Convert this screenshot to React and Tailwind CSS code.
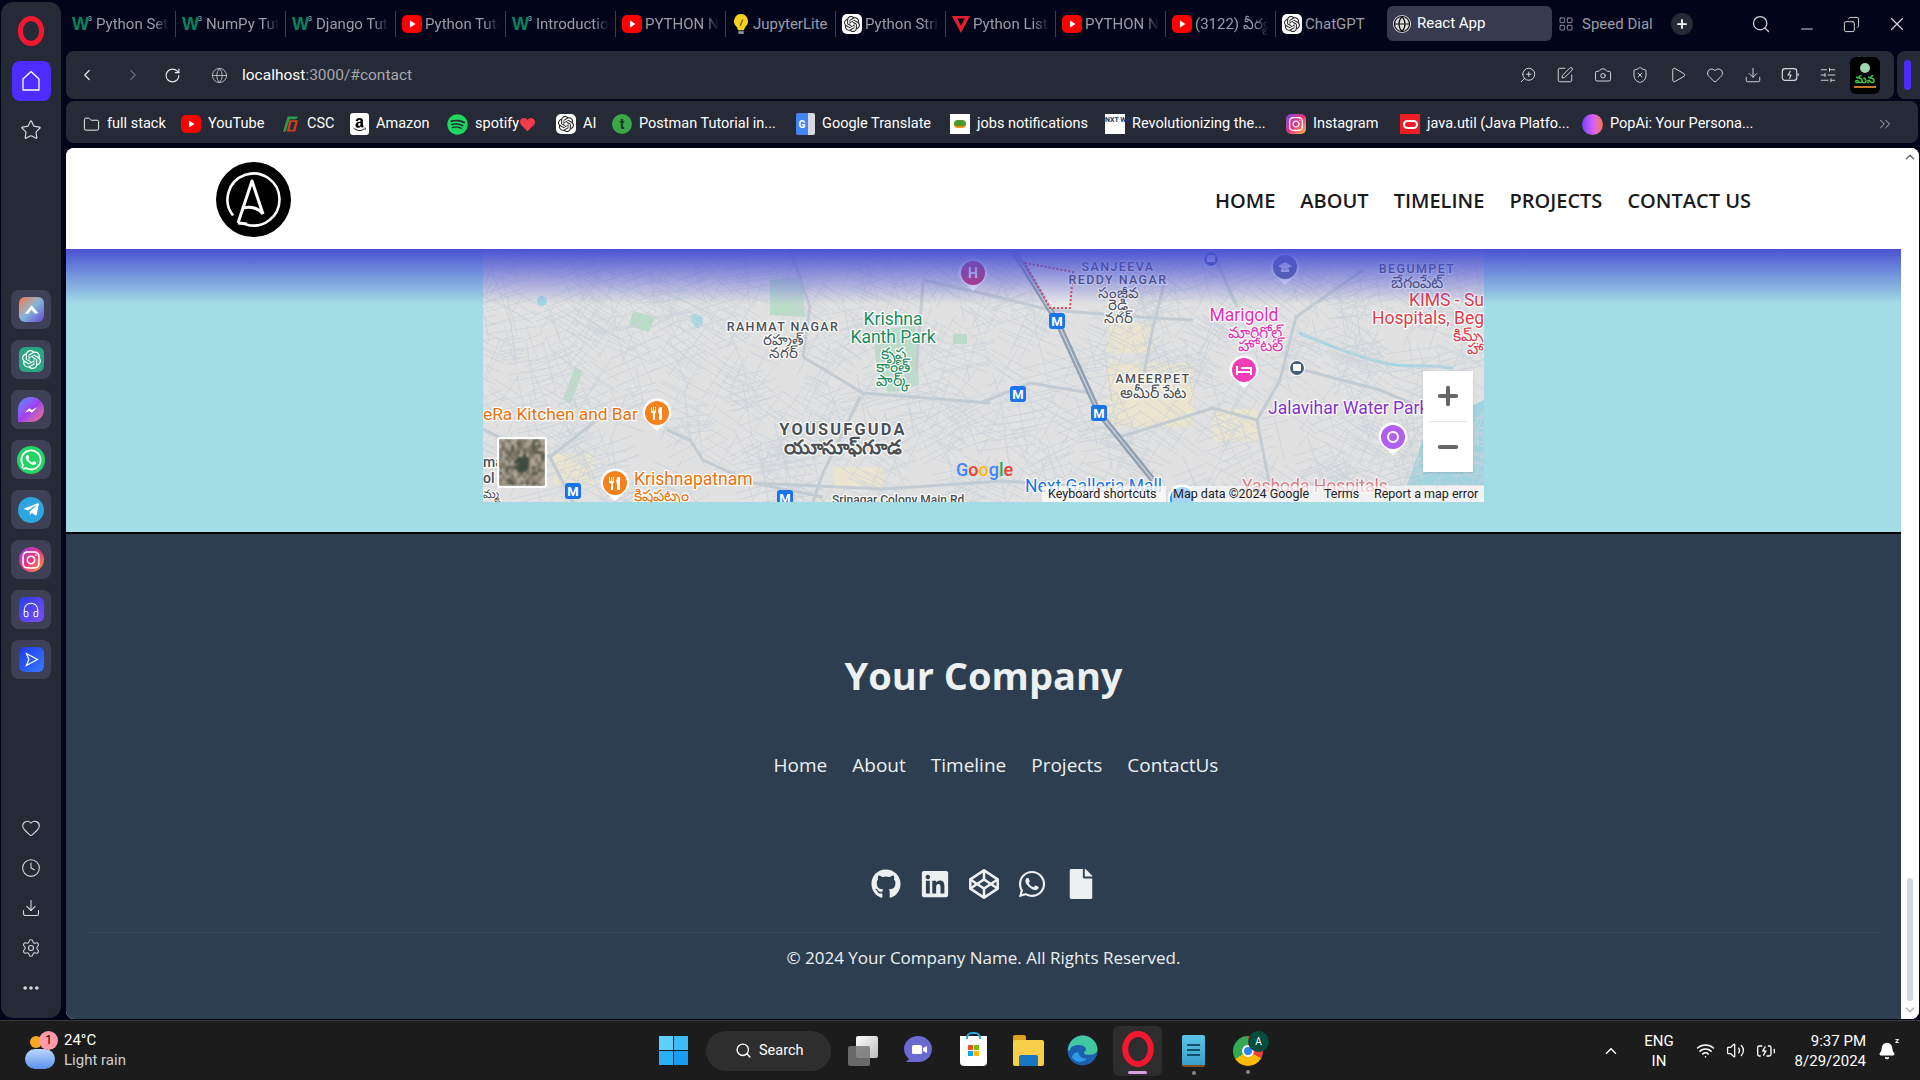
import React from 'react'
import { ChevronLeft, ChevronRight, RotateCw, Globe, Search, Minus, Copy, X, Plus, LayoutGrid, Star, Heart, Clock, Download, Settings, MoreHorizontal, ZoomIn, SquarePen, Camera, ShieldX, Play, SlidersHorizontal, Folder, ChevronsRight, ChevronUp, ChevronDown, Wifi, Volume2, BatteryCharging, Bell, Headphones } from 'lucide-react'
import { FaGithub, FaLinkedin, FaCodepen, FaWhatsapp, FaFile, FaTelegramPlane, FaInstagram, FaSpotify, FaAmazon, FaHeart } from 'react-icons/fa'
import { SiOpenai } from 'react-icons/si'

const YT = () => (
  <svg viewBox="0 0 20 20" className="w-[20px] h-[20px] shrink-0">
    <rect x="0" y="1" width="20" height="18" rx="5" fill="#f00" />
    <path d="M8 6.5 13.5 10 8 13.5z" fill="#fff" />
  </svg>
)
const W3 = () => (
  <span className="w-[21px] shrink-0 flex items-start text-[#04845c] font-bold text-[18px] leading-none font-['Liberation_Sans'] tracking-[-1px]">W<span className="text-[7px] text-[#bbb] font-normal tracking-normal">3</span></span>
)
const Gpt = () => (
  <span className="w-[20px] h-[20px] shrink-0 rounded-[5px] bg-white flex items-center justify-center"><SiOpenai className="w-[16px] h-[16px] text-[#222]" /></span>
)
const Bulb = () => (
  <svg viewBox="0 0 20 24" className="w-[18px] h-[22px] shrink-0">
    <path d="M10 1a8 8 0 0 0-5 14c1 1 1 3 2 4h6c1-1 1-3 2-4a8 8 0 0 0-5-14z" fill="#f5d21f" />
    <path d="M7 20h6v3H7z" fill="#999" />
    <path d="M9 14l3-7" stroke="#7a5b00" strokeWidth="1.4" />
  </svg>
)
const RedV = () => (
  <svg viewBox="0 0 20 20" className="w-[18px] h-[20px] shrink-0">
    <path d="M0 1h20L10 20z" fill="#e5202e" />
    <path d="M6 4h8l-4 8z" fill="#02051a" />
  </svg>
)

const tabs = [
  { icon: W3, label: 'Python Sets', fade: true },
  { icon: W3, label: 'NumPy Tutorial', fade: true },
  { icon: W3, label: 'Django Tutorial', fade: true },
  { icon: YT, label: 'Python Tutorial', fade: true },
  { icon: W3, label: 'Introduction', fade: true },
  { icon: YT, label: 'PYTHON Notes', fade: true },
  { icon: Bulb, label: 'JupyterLite' },
  { icon: Gpt, label: 'Python Strings', fade: true },
  { icon: RedV, label: 'Python Lists', fade: true },
  { icon: YT, label: 'PYTHON Notes', fade: true },
  { icon: YT, label: '(3122) వీర్య', fade: true },
  { icon: Gpt, label: 'ChatGPT' },
]

const Opera = ({ className }) => (
  <svg viewBox="0 0 24 24" className={className}>
    <ellipse cx="12" cy="12" rx="8.5" ry="10" fill="none" stroke="#f5172f" strokeWidth="4" />
  </svg>
)

const BatterySaver = ({ className }) => (
  <svg viewBox="0 0 20 20" className={className}>
    <rect x="1.5" y="3" width="16" height="13" rx="3" fill="none" stroke="currentColor" strokeWidth="1.3" />
    <path d="M19 8v3" stroke="currentColor" strokeWidth="1.3" />
    <path d="M10.5 5.5 8 10h3l-1.5 4" fill="none" stroke="currentColor" strokeWidth="1.3" />
  </svg>
)

const bookmarkIcons = {
  csc: (
    <svg viewBox="0 0 20 20" className="w-[19px] h-[20px] shrink-0">
      <path d="M7 2h11l-2 3H9L5 18H2z" fill="#2a9d4a" />
      <path d="M9 6h9l-3 12H6zM11 8l-2 8h4l2-8z" fill="#d8391f" fillRule="evenodd" />
    </svg>
  ),
  amazon: <span className="w-[19px] h-[22px] shrink-0 bg-white rounded-[3px] flex items-center justify-center"><FaAmazon className="w-[15px] h-[15px] text-black" /></span>,
  spotify: <FaSpotify className="w-[21px] h-[21px] shrink-0 text-[#1ed760]" />,
  postman: <span className="w-[20px] h-[20px] shrink-0 rounded-full bg-[#3aa648] flex items-center justify-center text-[#12361a] font-bold text-[14px] leading-none">t</span>,
  translate: <span className="w-[19px] h-[22px] shrink-0 rounded-[2px] bg-[#4285f4] flex items-center justify-center text-white text-[10px] font-bold border-r-[7px] border-[#d7dadf]">G</span>,
  jobs: <span className="w-[20px] h-[20px] shrink-0 bg-white flex items-center justify-center"><span className="w-[12px] h-[8px] rounded-full bg-[#4c9a2a] border-b-2 border-[#f08a1d]" /></span>,
  nxt: <span className="w-[20px] h-[20px] shrink-0 bg-white text-[#183b73] text-[7px] font-bold leading-[8px] text-center pt-[2px]">NXT WAVE</span>,
  insta: <span className="w-[20px] h-[20px] shrink-0 rounded-[5px] bg-linear-to-br from-[#7b36e0] via-[#ea2a80] to-[#fdb02c] flex items-center justify-center"><FaInstagram className="w-[16px] h-[16px] text-white" /></span>,
  java: <span className="w-[20px] h-[20px] shrink-0 bg-[#ef1c25] flex items-center justify-center"><span className="w-[15px] h-[9px] rounded-[5px] border-2 border-white" /></span>,
  popai: <span className="w-[21px] h-[21px] shrink-0 rounded-full bg-linear-to-r from-[#7a3cff] via-[#d05cff] to-[#ff6a3c]" />,
}

const bookmarks = [
  { name: 'full stack', icon: <Folder className="w-[17px] h-[17px] shrink-0 text-[#eee]" strokeWidth={1.4} />, w: 'w-[98px]' },
  { name: 'YouTube', icon: <YT />, w: 'w-[100px]' },
  { name: 'CSC', icon: bookmarkIcons.csc, w: 'w-[69px]' },
  { name: 'Amazon', icon: bookmarkIcons.amazon, w: 'w-[97px]' },
  { name: 'spotify', icon: bookmarkIcons.spotify, extra: <FaHeart className="w-[15px] h-[15px] text-[#f13a4a] ml-[1px]" />, w: 'w-[109px]' },
  { name: 'AI', icon: <Gpt />, w: 'w-[56px]' },
  { name: 'Postman Tutorial in...', icon: bookmarkIcons.postman, w: 'w-[184px]' },
  { name: 'Google Translate', icon: bookmarkIcons.translate, w: 'w-[154px]' },
  { name: 'jobs notifications', icon: bookmarkIcons.jobs, w: 'w-[155px]' },
  { name: 'Revolutionizing the...', icon: bookmarkIcons.nxt, w: 'w-[181px]' },
  { name: 'Instagram', icon: bookmarkIcons.insta, w: 'w-[114px]' },
  { name: 'java.util (Java Platfo...', icon: bookmarkIcons.java, w: 'w-[182px]' },
  { name: 'PopAi: Your Persona...', icon: bookmarkIcons.popai, w: 'w-[190px]' },
]

const Sidebar = () => {
  const apps = [
    <span key="a" className="w-[25px] h-[25px] rounded-md bg-linear-to-br from-[#f0703c] via-[#7fb5d8] to-[#6a3fd0] flex items-center justify-center"><svg viewBox="0 0 20 20" className="w-[17px] h-[17px]"><path d="M2 15 10 5l8 9-4 1-4-5-4 5z" fill="#fff" /></svg></span>,
    <span key="b" className="w-[25px] h-[25px] rounded-md bg-[#2aa583] flex items-center justify-center"><SiOpenai className="w-[19px] h-[19px] text-white" /></span>,
    <span key="c" className="w-[26px] h-[25px] rounded-full rounded-bl-[4px] bg-linear-to-br from-[#2f8bff] via-[#a03df0] to-[#ff6a6a] flex items-center justify-center"><svg viewBox="0 0 20 20" className="w-[18px] h-[18px]"><path d="M3 13l5-5 3 2 6-3-6 6-3-2z" fill="#fff" /></svg></span>,
    <FaWhatsapp key="d" className="w-[28px] h-[28px] text-white bg-[#25d366] rounded-full p-[2px]" />,
    <span key="e" className="w-[26px] h-[26px] rounded-full bg-[#2ca5e0] flex items-center justify-center"><FaTelegramPlane className="w-[17px] h-[17px] text-white" /></span>,
    <span key="f" className="w-[25px] h-[25px] rounded-full bg-linear-to-br from-[#8a2be2] via-[#ee2a7b] to-[#ff9a1f] flex items-center justify-center"><FaInstagram className="w-[20px] h-[20px] text-white" /></span>,
    <span key="g" className="w-[25px] h-[25px] rounded-md bg-linear-to-br from-[#1f3bf0] to-[#7a4bf5] flex items-center justify-center"><Headphones className="w-[18px] h-[18px] text-white" strokeWidth={1.4} /></span>,
    <span key="h" className="w-[25px] h-[25px] rounded-md bg-linear-to-br from-[#2430f0] to-[#3a7af5] flex items-center justify-center"><svg viewBox="0 0 20 20" className="w-[17px] h-[17px]"><path d="M4 3l13 7-13 7 3-7z" fill="none" stroke="#fff" strokeWidth="1.4" /></svg></span>,
  ]
  return (
    <aside className="w-[60px] ml-px mr-[5px] my-[2px] shrink-0 rounded-xl bg-[#262936] flex flex-col items-center">
      <Opera className="w-[30px] h-[30px] mt-[14px]" />
      <div className="w-[39px] h-[40px] mt-[15px] rounded-lg bg-[#4e2bff] flex items-center justify-center">
        <svg viewBox="0 0 20 22" className="w-[20px] h-[22px]"><path d="M2 9 10 1.5 18 9v11H2z" fill="none" stroke="#fff" strokeWidth="1.3" strokeLinejoin="round" /></svg>
      </div>
      <Star className="w-[22px] h-[22px] mt-[18px] text-[#d8d8dc]" strokeWidth={1.3} />
      <div className="mt-[149px] flex flex-col gap-[11px]">
        {apps.map((a, i) => (
          <div key={i} className="w-[40px] h-[39px] rounded-lg bg-[#3e4155] flex items-center justify-center">{a}</div>
        ))}
      </div>
      <div className="mt-auto mb-[20px] flex flex-col items-center gap-[20px] text-[#d8d8dc]">
        <Heart className="w-[20px] h-[20px]" strokeWidth={1.3} />
        <Clock className="w-[20px] h-[20px]" strokeWidth={1.3} />
        <Download className="w-[20px] h-[20px]" strokeWidth={1.3} />
        <Settings className="w-[20px] h-[20px]" strokeWidth={1.3} />
        <MoreHorizontal className="w-[20px] h-[20px]" strokeWidth={2.4} />
      </div>
    </aside>
  )
}

const TabRow = () => (
  <div className="h-[51px] shrink-0 flex items-start font-['Roboto'] text-[15px]">
    <div className="flex mt-[11px]">
      {tabs.map((t, i) => {
        const Icon = t.icon
        return (
          <div key={i} className={`w-[110px] h-[26px] pl-[6px] pr-[6px] flex items-center gap-[3px] overflow-hidden ${i < 11 ? 'border-r border-[#3a3d4c]' : ''}`}>
            <Icon />
            <span className={`whitespace-nowrap overflow-hidden text-[#9b9da6] ${t.fade ? '[mask-image:linear-gradient(to_right,black_80%,transparent)]' : ''}`}>{t.label}</span>
          </div>
        )
      })}
    </div>
    <div className="w-[165px] h-[35px] mt-[6px] ml-px rounded-md bg-[#383b50] flex items-center pl-[6px] gap-[6px] text-white">
      <Globe className="w-[18px] h-[18px] text-[#111] bg-[#ddd] rounded-full" strokeWidth={1.6} />
      <span>React App</span>
    </div>
    <div className="flex items-center h-[26px] mt-[11px] ml-[6px] gap-[8px] text-[#9b9da6]">
      <LayoutGrid className="w-[16px] h-[16px]" strokeWidth={1.3} />
      <span>Speed Dial</span>
    </div>
    <span className="w-[22px] h-[22px] mt-[13px] ml-[18px] rounded-full bg-[#262936] flex items-center justify-center"><Plus className="w-[14px] h-[14px] text-white" strokeWidth={3} /></span>
    <Search className="w-[20px] h-[20px] mt-[14px] ml-[58px] text-[#d4d4d8]" strokeWidth={1.5} />
    <Minus className="w-[18px] h-[18px] mt-[20px] ml-[27px] text-[#d4d4d8]" strokeWidth={1.4} />
    <Copy className="w-[17px] h-[17px] mt-[16px] ml-[27px] text-[#d4d4d8] -scale-x-100" strokeWidth={1.4} />
    <X className="w-[22px] h-[22px] mt-[13px] ml-[26px] text-[#d4d4d8]" strokeWidth={1.3} />
  </div>
)

const AddressRow = () => {
  const tools = [SquarePen, Camera, ShieldX, Play, Heart, Download]
  return (
    <div className="h-[48px] shrink-0 flex font-['Roboto']">
      <div className="w-[1828px] rounded-lg bg-[#262936] flex items-center pl-[12px] pr-[14px]">
        <ChevronLeft className="w-[18px] h-[18px] text-[#e8e8ea]" strokeWidth={1.6} />
        <ChevronRight className="w-[18px] h-[18px] ml-[28px] text-[#676a75]" strokeWidth={1.6} />
        <RotateCw className="w-[17px] h-[17px] ml-[22px] text-[#e8e8ea]" strokeWidth={1.6} />
        <Globe className="w-[17px] h-[17px] ml-[30px] text-[#c8c8cc]" strokeWidth={1.2} />
        <span className="ml-[14px] mt-[2px] text-[15.5px] text-white">localhost<span className="text-[#a6a8b0]">:3000/#contact</span></span>
        <div className="ml-auto flex items-center gap-[19.5px] text-[#d6d6da]">
          <ZoomIn className="w-[18px] h-[18px] -scale-x-100" strokeWidth={1.3} />
          {tools.map((Tool, i) => <Tool key={i} className="w-[18px] h-[18px]" strokeWidth={1.3} />)}
          <BatterySaver className="w-[18px] h-[18px]" />
          <SlidersHorizontal className="w-[18px] h-[18px]" strokeWidth={1.3} />
          <span className="w-[30px] h-[37px] -ml-[6px] rounded-md bg-black flex flex-col items-center justify-center overflow-hidden">
            <span className="w-[10px] h-[10px] rounded-full bg-[#9fd8b0]" />
            <span className="text-[#3fd04a] text-[11px] font-bold leading-[13px]">మన</span>
            <span className="w-[22px] h-[2px] bg-[#c77a2a]" />
          </span>
        </div>
      </div>
      <div className="ml-[3px] flex-1 rounded-l-lg bg-[#262936] flex items-center pl-[7px]">
        <span className="w-[7px] h-[30px] rounded-full bg-[#4e2bff]" />
      </div>
    </div>
  )
}

const BookmarkRow = () => (
  <div className="h-[42px] mt-[2px] mr-[2px] pt-[4px] shrink-0 rounded-lg bg-[#262936] flex items-center pl-[17px] font-['Roboto'] text-[14.5px] text-white">
    {bookmarks.map((b, i) => (
      <div key={i} className={`${b.w} shrink-0 flex items-center gap-[7px] whitespace-nowrap`}>
        {b.icon}
        <span className="flex items-center">{b.name}{b.extra}</span>
      </div>
    ))}
    <ChevronsRight className="w-[18px] h-[18px] ml-auto mr-[24px] text-[#c8c8cc]" strokeWidth={1.2} />
  </div>
)

const Logo = () => (
  <svg viewBox="0 0 75 75" className="w-[75px] h-[75px]">
    <circle cx="37.5" cy="37.5" r="37.5" fill="#000" />
    <path d="M17 53.5A26 26 0 1 1 30 62.4" fill="none" stroke="#fff" strokeWidth="2.6" />
    <path d="M22 61 36 19 47 52M27 46c8-2 15 0 20 6M22 61l9 1" fill="none" stroke="#fff" strokeWidth="3" strokeLinejoin="round" />
  </svg>
)

// seeded so the street pattern stays the same on each load
const seeded = start => {
  let s = start
  return () => {
    s = (s * 16807) % 2147483647
    return s / 2147483647
  }
}

const buildStreets = () => {
  const rnd = seeded(17)
  let d = ''
  for (let i = 0; i < 520; i++) {
    const cx = rnd() * 1001
    const cy = rnd() * 253
    const a = (rnd() < 0.6 ? 0.3 : -0.5) + rnd() * 0.4
    const ux = Math.cos(a)
    const uy = Math.sin(a)
    const len = 10 + rnd() * 20
    const n = 2 + Math.floor(rnd() * 3)
    for (let j = 0; j < n; j++) {
      const o = j * (6 + rnd() * 5)
      const x = cx - uy * o
      const y = cy + ux * o
      d += `M${(x - ux * len).toFixed(1)} ${(y - uy * len).toFixed(1)}L${(x + ux * len).toFixed(1)} ${(y + uy * len).toFixed(1)}`
    }
    const cl = 10 + rnd() * 12
    d += `M${(cx + uy * cl).toFixed(1)} ${(cy - ux * cl).toFixed(1)}L${(cx - uy * cl * 2).toFixed(1)} ${(cy + ux * cl * 2).toFixed(1)}`
  }
  return d
}
const streets = buildStreets()

const buildThumb = () => {
  const rnd = seeded(91)
  const tones = ['#8f8572', '#6f6c5c', '#a2998a', '#565a4c', '#7d7768', '#b0a898']
  const out = []
  for (let y = 0; y < 47; y += 3) {
    for (let x = 0; x < 46; x += 3) {
      const dark = Math.hypot(x - 22, y - 22) < 9 && rnd() < 0.75
      out.push({ x, y, fill: dark ? '#3f4a3f' : tones[Math.floor(rnd() * tones.length)] })
    }
  }
  return out
}
const thumbCells = buildThumb()

const roads = [
  'M184 181 207 191 220 211 270 234 340 248',
  'M67 208 114 171',
  'M0 180 30 195 67 208 90 253',
  'M320 108 380 144 507 154',
  'M377 148 340 224 330 253',
  'M307 1 327 58 320 108',
  'M440 34 433 124',
  'M440 31 507 46 567 61 670 69 710 71',
  'M683 28 670 78 660 130',
  'M880 21 813 68 797 131 774 171 787 238',
  'M497 154 547 134 607 144',
  'M637 188 730 159 774 171',
  'M813 119 897 141 937 158',
  'M730 4 754 58',
  'M270 234 400 240 520 232 640 240',
]

const Label = ({ x, y, size = 12.5, fill = '#4a4f55', weight = 500, spacing = 0, anchor = 'middle', opacity = 1, children }) => (
  <text x={x} y={y} fontSize={size} fill={fill} fontWeight={weight} letterSpacing={spacing} textAnchor={anchor} opacity={opacity} stroke="#fff" strokeWidth="2.5" paintOrder="stroke" strokeLinejoin="round" fontFamily="Roboto, 'Noto Sans', sans-serif">{children}</text>
)

const Pin = ({ x, y, color, children }) => (
  <g transform={`translate(${x} ${y})`}>
    <path d="M-14.5 0a14.5 14.5 0 1 1 29 0c0 6-5 9-14.5 18C-9 9-14.5 6-14.5 0z" fill="#fff" />
    <circle r="12" fill={color} />
    {children}
  </g>
)
const Fork = () => <path d="M-6-6v6h2v7h2V0h1V-6h-1v4h-1v-4h-1v4h-1v-4zM3-6c-2 1-2 5-1 7v6h3V-6z" fill="#fff" />

const Metro = ({ x, y }) => (
  <g transform={`translate(${x} ${y})`}>
    <rect x="-8" y="-8" width="16" height="16" rx="3" fill="#1a73e8" />
    <text y="5" textAnchor="middle" fontSize="13" fontWeight="700" fill="#fff" fontFamily="Roboto">M</text>
  </g>
)

const GoogleMap = () => (
  <div className="relative w-[1001px] h-[253px] overflow-hidden bg-[#e1e1e2] font-['Roboto']">
    <svg viewBox="0 0 1001 253" className="block w-full h-full">
      <path d="M624 74h46v30h-46zM624 114h86v64h-86zM730 160h45v32h-45zM350 218h50v22h-50zM70 205h40v30H70z" fill="#ebe5cf" />
      <path d="M287 31l32-3 3 40-35-2zM150 62l22 6-6 15-20-6zM390 82l42-6 4 60-30 8-12-20zM92 118l8 4-12 32-8-4zM470 85h14v10h-14zM327 172h12v10h-12z" fill="#b8dcc6" />
      <path d="M924 236 944 178 1001 151V236z" fill="#9fd3e0" />
      <path d="M64 52a5 5 0 1 1 0-.1zM208 67c6-4 12 0 12 5s-6 10-8 6-6-8-4-11z" fill="#a3d7e4" />
      <path d="M816 84c30 12 60 25 90 31 20 4 50 0 64 5" fill="none" stroke="#a3d7e4" strokeWidth="3" />
      <path d={streets} fill="none" stroke="#ccd3d9" strokeWidth="1" strokeOpacity="0.8" />
      {roads.map((r, i) => <path key={i} d={r} fill="none" stroke="#c4ccd3" strokeWidth="3" />)}
      <path d="M530 1 574 72 616 164 670 231" fill="none" stroke="#8f9fb0" strokeWidth="6" />
      <path d="M530 1 574 72 616 164 670 231" fill="none" stroke="#c6ced6" strokeWidth="1.5" />
      <path d="M542 14 590 23 587 59 567 59z" fill="#ececec" fillOpacity="0.7" stroke="#e8434b" strokeWidth="2" strokeDasharray="2 2" />

      <Label x={300} y={82} spacing={1.4}>RAHMAT NAGAR</Label>
      <Label x={300} y={96} size={15}>రహ్మత్</Label>
      <Label x={300} y={109} size={15}>నగర్</Label>
      <Label x={410} y={76} size={17.5} fill="#1a8a5e" weight={400}>Krishna</Label>
      <Label x={410} y={94} size={17.5} fill="#1a8a5e" weight={400}>Kanth Park</Label>
      <Label x={410} y={110} size={16} fill="#1a8a5e">కృష్ణ</Label>
      <Label x={410} y={123} size={16} fill="#1a8a5e">కాంత్</Label>
      <Label x={410} y={137} size={16} fill="#1a8a5e">పార్క్</Label>
      <Label x={360} y={186} size={16.4} weight={700} spacing={2.2}>YOUSUFGUDA</Label>
      <Label x={360} y={205} size={20} weight={700}>యూసూఫ్‌గూడ</Label>
      <Label x={0} y={171} size={17.3} fill="#e8710a" weight={400} anchor="start">eRa Kitchen and Bar</Label>
      <Label x={151} y={236} size={17.5} fill="#e8710a" weight={400} anchor="start">Krishnapatnam</Label>
      <Label x={151} y={252} size={16} fill="#e8710a" anchor="start">క్రిష్ణపట్నం</Label>
      <Label x={635} y={22} spacing={1.4}>SANJEEVA</Label>
      <Label x={635} y={35} spacing={1.4}>REDDY NAGAR</Label>
      <Label x={635} y={49} size={15}>సంజీవ</Label>
      <Label x={635} y={61} size={15}>రెడ్డి</Label>
      <Label x={635} y={74} size={15}>నగర్</Label>
      <Label x={670} y={134} spacing={1.4}>AMEERPET</Label>
      <Label x={670} y={149} size={16}>అమీర్ పేట</Label>
      <Label x={761} y={72} size={17.5} fill="#e52fb5" weight={400}>Marigold</Label>
      <Label x={772} y={89} size={16} fill="#e52fb5">మారిగోల్డ్</Label>
      <Label x={777} y={102} size={16} fill="#e52fb5">హోటల్</Label>
      <Label x={934} y={24} spacing={1.4}>BEGUMPET</Label>
      <Label x={934} y={39} size={16}>బేగంపేట్</Label>
      <Label x={1001} y={57} size={17.5} fill="#de3b47" weight={400} anchor="end">KIMS - Su</Label>
      <Label x={1001} y={75} size={17.5} fill="#de3b47" weight={400} anchor="end">Hospitals, Beg</Label>
      <Label x={1001} y={92} size={16} fill="#de3b47" anchor="end">కిమ్స్</Label>
      <Label x={1001} y={105} size={16} fill="#de3b47" anchor="end">హా</Label>
      <Label x={785} y={165} size={17.5} fill="#8430ce" weight={400} anchor="start">Jalavihar Water Park</Label>
      <Label x={542} y={243} size={17.5} fill="#1a73e8" weight={400} anchor="start">Next Galleria Mall</Label>
      <Label x={759} y={243} size={17.5} fill="#de3b47" weight={400} anchor="start" opacity={0.6}>Yashoda Hospitals</Label>
      <Label x={349} y={255} size={12} anchor="start">Srinagar Colony Main Rd</Label>
      <Label x={0} y={218} size={14} anchor="start">ma</Label>
      <Label x={0} y={234} size={14} anchor="start">ol</Label>
      <Label x={0} y={249} size={12} anchor="start">మ్మ</Label>

      <Pin x={174} y={164} color="#f5821f"><Fork /></Pin>
      <Pin x={132} y={234} color="#f5821f"><Fork /></Pin>
      <Pin x={490} y={24} color="#d8326a"><text y="5" textAnchor="middle" fontSize="14" fontWeight="700" fill="#fff" fontFamily="Roboto">H</text></Pin>
      <Pin x={761} y={121} color="#f23db7"><path d="M-7-4v9M-7 2H7v3M-3-2h10v4" stroke="#fff" strokeWidth="2" fill="none" /></Pin>
      <Pin x={910} y={188} color="#b060f0"><circle r="5" fill="none" stroke="#fff" strokeWidth="2" /></Pin>
      <Pin x={802} y={18} color="#5b6a9a"><path d="M-7-1 0-5 7-1 0 3zM-4 2v3h8V2" fill="#fff" /></Pin>
      <Pin x={699} y={250} color="#2196f3" />
      <Metro x={90} y={242} />
      <Metro x={302} y={249} />
      <Metro x={574} y={72} />
      <Metro x={535} y={145} />
      <Metro x={616} y={164} />
      <g transform="translate(814 119)"><circle r="8" fill="#fff" /><circle r="7" fill="#46607a" /><rect x="-4" y="-4" width="8" height="7" rx="1" fill="#fff" /></g>
      <g transform="translate(728 10)"><circle r="8" fill="#fff" /><circle r="7" fill="#4a5fa0" /><rect x="-4" y="-4" width="8" height="7" rx="1" fill="#fff" /></g>

      <text x={473} y={227} fontSize="18" fontWeight="500" fontFamily="Roboto">
        <tspan fill="#4285f4">G</tspan><tspan fill="#ea4335">o</tspan><tspan fill="#fbbc05">o</tspan><tspan fill="#4285f4">g</tspan><tspan fill="#34a853">l</tspan><tspan fill="#ea4335">e</tspan>
      </text>
    </svg>

    <div className="absolute left-[14px] top-[188px] w-[50px] h-[51px] rounded-[3px] border-2 border-white overflow-hidden">
      <svg viewBox="0 0 46 47" className="block w-full h-full blur-[1px]">
        {thumbCells.map((c, i) => <rect key={i} x={c.x} y={c.y} width="3" height="3" fill={c.fill} />)}
      </svg>
    </div>

    <div className="absolute left-[940px] top-[122px] w-[50px] h-[101px] bg-white flex flex-col items-center shadow-sm">
      <div className="h-[50px] flex items-center justify-center"><Plus className="w-[28px] h-[28px] text-[#666]" strokeWidth={3.4} /></div>
      <div className="w-[37px] h-px bg-[#e6e6e6]" />
      <div className="flex-1 flex items-center justify-center"><Minus className="w-[28px] h-[28px] text-[#666]" strokeWidth={3.4} /></div>
    </div>

    <div className="absolute right-0 bottom-0 h-[17px] w-[442px] pt-[1px] flex items-center rounded-br-sm text-[12.5px] leading-none text-[#222]">
      <span className="w-[124px] h-full bg-white/75 pl-[6px] flex items-center whitespace-nowrap">Keyboard shortcuts</span>
      <div className="flex-1 h-full ml-[6px] bg-white/60 flex items-center pl-[1px] whitespace-nowrap">
        <span className="w-[151px]">Map data ©2024 Google</span>
        <span className="w-[50px]">Terms</span>
        <span>Report a map error</span>
      </div>
    </div>
  </div>
)

const Scrollbar = () => (
  <div className="w-[18px] shrink-0 bg-white flex flex-col items-center">
    <ChevronUp className="w-[14px] h-[14px] mt-[2px] text-[#777]" strokeWidth={3} />
    <div className="mt-auto w-[6px] h-[123px] rounded-full bg-[#ced8e4]" />
    <ChevronDown className="w-[14px] h-[14px] mt-[2px] mb-[2px] text-[#bbb]" strokeWidth={3} />
  </div>
)

const Site = () => {
  const head = ['HOME', 'ABOUT', 'TIMELINE', 'PROJECTS', 'CONTACT US']
  const links = ['Home', 'About', 'Timeline', 'Projects', 'ContactUs']
  return (
    <div className="flex-1 mb-px mr-px flex overflow-hidden rounded-lg bg-white font-['Open_Sans']">
      <div className="w-[1835px] flex flex-col">
        <header className="h-[101px] pt-[1px] shrink-0 bg-white flex items-center pl-[150px] pr-[150px] justify-between">
          <Logo />
          <nav className="flex gap-[25px] text-[20px] font-semibold text-[#1a1a1a] mt-[3px]">
            {head.map(h => <a key={h}>{h}</a>)}
          </nav>
        </header>

        <section className="relative h-[283px] shrink-0 bg-[#a2dde6] flex justify-center">
          <GoogleMap />
          <div className="absolute inset-x-0 top-0 h-[55px] bg-linear-to-b from-[#4a52d2] to-transparent" />
        </section>

        <footer className="flex-1 border-t-2 border-black bg-[#2c3e50] text-[#ecf0f1] flex flex-col items-center">
          <h2 className="mt-[115px] text-[38px] leading-[52px] font-bold">Your Company</h2>
          <div className="mt-[49px] ml-[25px] flex gap-[25px] text-[19px] leading-[30px]">
            {links.map(l => <a key={l}>{l}</a>)}
          </div>
          <div className="mt-[89px] flex items-center gap-[18.75px] text-[30px]">
            <FaGithub />
            <FaLinkedin />
            <FaCodepen />
            <FaWhatsapp />
            <FaFile />
          </div>
          <div className="mt-[33px] w-[1788px] h-px bg-[#34495e]" />
          <p className="mt-[11px] text-[17px] leading-[27px]">© 2024 Your Company Name. All Rights Reserved.</p>
        </footer>
      </div>
      <Scrollbar />
    </div>
  )
}

const Taskbar = () => (
  <div className="h-[60px] shrink-0 bg-[#1c1c1c] border-t border-[#3a3a3a] flex items-center text-white font-['Roboto']">
    <div className="w-[659px] shrink-0 flex items-center pl-[25px]">
      <div className="relative w-[30px] h-[40px]">
        <span className="absolute left-[5px] top-[5px] w-[12px] h-[12px] rounded-full bg-[#f7a81f]" />
        <span className="absolute left-0 bottom-[2px] w-[30px] h-[20px] rounded-full bg-linear-to-b from-[#bcd6fb] to-[#5d92ee]" />
        <span className="absolute left-[14px] top-0 w-[19px] h-[19px] rounded-full bg-[#ff9aa8] text-black text-[12px] flex items-center justify-center">1</span>
      </div>
      <div className="ml-[9px] -mt-[1px] text-[15px] leading-[20px]">
        <div>24°C</div>
        <div className="text-[#cfcfcf]">Light rain</div>
      </div>
    </div>
    <div className="w-[29px] h-[29px] shrink-0 grid grid-cols-2 gap-[1.5px]">
      <span className="bg-[#5fd0fa]" /><span className="bg-[#3dbdf7]" /><span className="bg-[#2ab0f5]" /><span className="bg-[#1a9cf0]" />
    </div>
    <div className="w-[125px] h-[40px] ml-[18px] shrink-0 rounded-full bg-[#2e2e2e] flex items-center pl-[29px] gap-[7px] text-[14.5px]">
      <Search className="w-[17px] h-[17px]" strokeWidth={2} />
      <span>Search</span>
    </div>
    <div className="relative w-[30px] h-[30px] ml-[17px] shrink-0">
      <span className="absolute right-0 top-0 w-[22px] h-[22px] rounded-[2px] bg-linear-to-br from-white to-[#bbb]" />
      <span className="absolute left-0 bottom-0 w-[22px] h-[20px] rounded-[2px] bg-[#777]/85" />
    </div>
    <svg viewBox="0 0 28 30" className="w-[28px] h-[30px] ml-[26px] shrink-0">
      <path d="M14 0c8 0 14 6 14 13s-6 13-13 13H2l3-3C2 20 0 17 0 13 0 6 6 0 14 0z" fill="#6a6ad0" />
      <rect x="8" y="9" width="10" height="9" rx="1.5" fill="#fff" />
      <path d="M19 12l4-2v7l-4-2z" fill="#fff" />
    </svg>
    <div className="relative w-[27px] h-[30px] ml-[28px] shrink-0 rounded-b-[4px] bg-white flex items-center justify-center">
      <span className="absolute -top-[4px] left-[6px] w-[15px] h-[7px] rounded-t-md border-2 border-b-0 border-[#2aa6e0]" />
      <span className="grid grid-cols-2 gap-px w-[11px] h-[11px]"><span className="bg-[#f25022]" /><span className="bg-[#7fba00]" /><span className="bg-[#00a4ef]" /><span className="bg-[#ffb900]" /></span>
    </div>
    <div className="relative w-[31px] h-[31px] ml-[26px] shrink-0">
      <span className="absolute left-0 top-0 w-[13px] h-[8px] rounded-t-[2px] bg-[#e0a21c]" />
      <span className="absolute left-0 top-[5px] w-[31px] h-[26px] rounded-[2px] bg-[#f9cf4a]" />
      <span className="absolute left-[6px] bottom-0 w-[19px] h-[11px] rounded-t-[2px] bg-[#1976c5]" />
    </div>
    <svg viewBox="0 0 32 32" className="w-[31px] h-[31px] ml-[23px] shrink-0">
      <circle cx="16" cy="16" r="15.5" fill="#1d5fae" />
      <path d="M1 15C2 6 9 .5 16 .5c8 0 15 6 15.5 14 0 5-5 6-9 6-3 0-5-1-5-3 2-1 3-3 1-5-3-3-11-3-15 1C4 15 2 18 1 15z" fill="#40c8a0" />
      <path d="M12 18c0 4 4 7 9 6-4 5-12 5-16-1 1-4 4-6 7-5z" fill="#2c9be8" />
    </svg>
    <div className="w-[49px] h-[50px] ml-[15px] shrink-0 rounded-md bg-[#2d2d2d] flex flex-col items-center relative">
      <Opera className="w-[36px] h-[36px] mt-[5px]" />
      <span className="absolute bottom-[2px] w-[19px] h-[3px] rounded-full bg-[#d8a0e0]" />
    </div>
    <div className="relative w-[23px] h-[32px] ml-[20px] shrink-0 rounded-[2px] border-b-2 border-[#8a4b20] bg-linear-to-b from-[#5cc4e8] to-[#38a0c8] flex flex-col items-center justify-center gap-[3px]">
      <span className="w-[13px] h-[2px] bg-[#14506e]" /><span className="w-[13px] h-[2px] bg-[#14506e]" /><span className="w-[13px] h-[2px] bg-[#14506e]" />
      <span className="absolute -bottom-[10px] w-[4px] h-[4px] rounded-full bg-[#888]" />
    </div>
    <div className="relative w-[30px] h-[30px] ml-[28px] shrink-0">
      <span className="block w-full h-full rounded-full bg-[conic-gradient(#ea4335_0_33%,#fbbc05_33%_66%,#34a853_66%)]" />
      <span className="absolute left-[9px] top-[9px] w-[12px] h-[12px] rounded-full bg-[#2f7ff0] border-2 border-white" />
      <span className="absolute -top-[5px] left-[15px] w-[21px] h-[21px] rounded-full bg-[#004d40] text-white text-[10px] flex items-center justify-center">A</span>
      <span className="absolute -bottom-[8px] left-[13px] w-[4px] h-[4px] rounded-full bg-[#888]" />
    </div>
    <ChevronUp className="w-[18px] h-[18px] ml-[339px] shrink-0" strokeWidth={2} />
    <div className="w-[40px] ml-[19px] shrink-0 text-center text-[15px] leading-[20px]">
      <div>ENG</div>
      <div>IN</div>
    </div>
    <Wifi className="w-[19px] h-[19px] ml-[17px] shrink-0" strokeWidth={2} />
    <Volume2 className="w-[19px] h-[19px] ml-[11px] shrink-0" strokeWidth={1.6} />
    <BatteryCharging className="w-[20px] h-[20px] ml-[11px] shrink-0" strokeWidth={1.6} />
    <div className="w-[88px] ml-[2px] shrink-0 text-right text-[15px] leading-[20px]">
      <div>9:37 PM</div>
      <div>8/29/2024</div>
    </div>
    <div className="relative ml-[12px] shrink-0">
      <Bell className="w-[18px] h-[18px] fill-white" strokeWidth={2} />
      <span className="absolute -top-[5px] -right-[3px] text-[8px] font-bold leading-none">z</span>
    </div>
  </div>
)

export default function App() {
  return (
    <div className="w-[1920px] h-[1080px] overflow-hidden flex flex-col bg-[#02051a]">
      <div className="h-[1020px] shrink-0 flex">
        <Sidebar />
        <div className="flex-1 min-w-0 flex flex-col">
          <TabRow />
          <AddressRow />
          <BookmarkRow />
          <div className="h-[5px] shrink-0" />
          <Site />
        </div>
      </div>
      <Taskbar />
    </div>
  )
}
